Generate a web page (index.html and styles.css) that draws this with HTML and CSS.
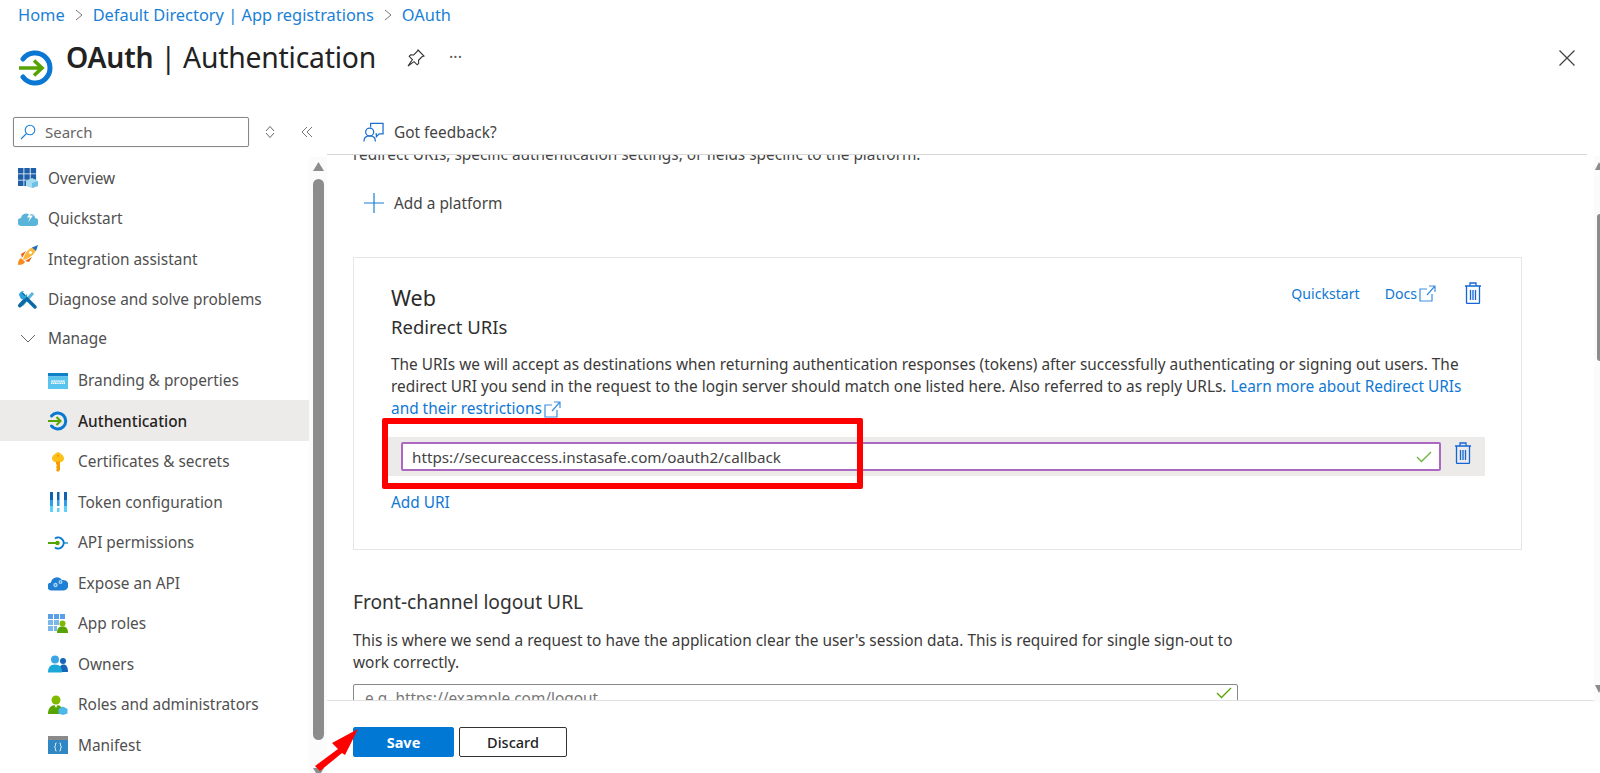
FILE: index.html
```html
<!DOCTYPE html>
<html lang="en">
<head>
<meta charset="utf-8">
<title>OAuth | Authentication</title>
<link rel="stylesheet" href="styles.css">
</head>
<body>
<div class="page">
  <nav class="crumbs">
    <a>Home</a>
    <svg class="crumb-sep" viewBox="0 0 10 14"><path d="M2 2l6 5-6 5"/></svg>
    <a>Default Directory | App registrations</a>
    <svg class="crumb-sep" viewBox="0 0 10 14"><path d="M2 2l6 5-6 5"/></svg>
    <a>OAuth</a>
  </nav>
  <header class="head">
    <svg class="head-icon" viewBox="0 0 34 36">
      <path d="M4 9A15 15 0 1 1 4 27" fill="none" stroke="#0a78d2" stroke-width="5" stroke-linecap="round"/>
      <path d="M0 18h21M15 10.500l8 7.500-8 7.500" fill="none" stroke="#57a300" stroke-width="3.600"/>
    </svg>
    <h1 class="title"><b>OAuth</b> | Authentication</h1>
    <svg class="pin" viewBox="0 0 18 18"><path d="M11 1l6 6-2 .8-3.500 3.500.2 3-1.500 1.500-3.200-3.200L1 17l4.400-6.500L2.200 7.300l1.500-1.500 3 .2L10.200 2.500z"/></svg>
    <span class="dots">···</span>
    <svg class="close" viewBox="0 0 16 16"><path d="M.5.5l15 15M15.500.5l-15 15"/></svg>
  </header>
  <div class="body">
    <aside class="side">
      <div class="side-tools">
        <div class="search">
          <svg class="search-icon" viewBox="0 0 16 16"><circle cx="10" cy="6" r="4.800"/><path d="M6.500 9.500L1 15"/></svg>
          <span>Search</span>
        </div>
        <svg class="sort" viewBox="0 0 10 14"><path d="M5 1.500L9 6M1 6l4-4.500M1 8l4 4.500L9 8"/></svg>
        <svg class="collapse" viewBox="0 0 12 12"><path d="M6 1L1 6l5 5M11 1L6 6l5 5"/></svg>
      </div>
      <div class="side-body">
        <ul class="nav">
          <li class="item">
            <svg class="ico" viewBox="0 0 20 20"><path fill="#1f5fa8" d="M0 0h5.500v5.500H0zM6.300 0h5.500v5.500H6.300zM12.600 0h5.500v5.500h-5.500zM0 6.300h5.500v5.500H0zM6.300 6.300h5.500v5.500H6.300zM12.600 6.300h5.500v5.500h-5.500zM0 12.600h5.500v5.500H0zM6.300 12.600h5.500v5.500H6.300z"/><path fill="#a5dcf0" d="M8 13l6-3 6 3v5l-6 2-6-2z"/><path fill="#6fc0e4" d="M14 15v5l6-2v-5z"/></svg>
            Overview</li>
          <li class="item">
            <svg class="ico" viewBox="0 0 20 20"><path fill="#59b4d9" d="M4 17a4 4 0 0 1-1-8 5 5 0 0 1 8-3.500 4 4 0 0 1 6 3.500 4 4 0 0 1-1 8z"/><path fill="#fff" d="M13 2l-4 6.500h3l-2 5 5-7h-3l2.500-4.500z"/></svg>
            Quickstart</li>
          <li class="item">
            <svg class="ico rocket" viewBox="0 0 20 20"><path fill="#f78d1e" d="M0 20c0-4 1-6 3-7l4 4c-1 2-3 3-7 3z"/><path fill="#e8621a" d="M3 9l5-3-4 7zM11 17l3-5-7 4z"/><path fill="#fbb83c" d="M5 15C6 9 10 4 15 2l3 3c-2 5-7 9-13 10z"/><path fill="#1e6fc4" d="M14 2.400L20 0l-2 6z"/><circle cx="12.500" cy="7.500" r="1.600" fill="#fff"/></svg>
            Integration assistant</li>
          <li class="item">
            <svg class="ico" viewBox="0 0 20 20"><path d="M15 3L4 15" stroke="#59b4d9" stroke-width="3" fill="none"/><path d="M7 10l-5 5.500" stroke="#0a6aa8" stroke-width="4" stroke-linecap="round" fill="none"/><path d="M4 4l13 13" stroke="#0a6aa8" stroke-width="3.500" stroke-linecap="round" fill="none"/><path d="M1 5a4.500 4.500 0 0 1 5-4L4 3.500 6.500 6 9 4a4.500 4.500 0 0 1-6 5z" fill="#2ba4dc"/></svg>
            Diagnose and solve problems</li>
          <li class="item manage">
            <svg class="chev" viewBox="0 0 16 10"><path d="M1 1l7 7 7-7"/></svg>
            Manage</li>
          <li class="item sub">
            <svg class="ico" viewBox="0 0 20 20"><path fill="#0f7fc8" d="M0 2h20v3.500H0z"/><path fill="#59c4ee" d="M0 5.500h20V18H0z"/><path fill="#fff" d="M3 9.500h14v3.500H3z"/><path fill="none" stroke="#59c4ee" stroke-width=".7" d="M3.500 10l1 2.500 1-2 1 2 1-2.500M8 10l1 2.500 1-2 1 2 1-2.500M12.500 10l1 2.500 1-2 1 2 1-2.500"/></svg>
            Branding &amp; properties</li>
          <li class="item sub current">
            <svg class="ico" viewBox="0 0 20 20"><path d="M3.500 5A8 8 0 1 1 3.500 15" fill="none" stroke="#0a78d2" stroke-width="3" stroke-linecap="round"/><path d="M0 10h12M8.500 6l4 4-4 4" fill="none" stroke="#57a300" stroke-width="2"/></svg>
            Authentication</li>
          <li class="item sub">
            <svg class="ico" viewBox="0 0 20 20"><path fill="#fcc21b" d="M10 0c3 1.500 6 3.500 6 6.500 0 2.500-2.500 4-6 4s-6-1.500-6-4C4 3.500 7 1.500 10 0z"/><path fill="#f59c00" d="M8 9.500h4V18l-2 2-2-2 1-1.500-1-1.500 1-1.500-1-1.500z"/><circle cx="10" cy="3.800" r="1.100" fill="#e89a00"/></svg>
            Certificates &amp; secrets</li>
          <li class="item sub">
            <svg class="ico" viewBox="0 0 20 20"><path fill="#0f62b0" d="M2 0h3v8H2zM16 0h3v8h-3zM9 0h2.500v8H9z"/><path fill="#2f9fe8" d="M2 8h3v6H2zM16 8h3v6h-3zM9 8h2.500v6H9z"/><path fill="#5fd0f8" d="M2 14h3v6H2zM16 14h3v6h-3zM9 16h2.500v4H9z"/></svg>
            Token configuration</li>
          <li class="item sub">
            <svg class="ico" viewBox="0 0 20 20"><path d="M0 10h8" stroke="#57a300" stroke-width="2"/><path d="M15 10h5" stroke="#59b4d9" stroke-width="2"/><path d="M7 5.500a5.500 5.500 0 1 1 0 9" fill="none" stroke="#0a78d2" stroke-width="2"/><circle cx="9.500" cy="10" r="2.200" fill="#57a300"/></svg>
            API permissions</li>
          <li class="item sub">
            <svg class="ico" viewBox="0 0 20 20"><path fill="#1e7fd4" d="M4 17.500a4 4 0 0 1-1-8 6 6 0 0 1 11-2.500 5.200 5.200 0 0 1 2 10.500z"/><circle cx="7.500" cy="12" r="2.200" fill="#a9d4f4"/><circle cx="12.500" cy="9" r="2" fill="#a9d4f4"/><circle cx="7.500" cy="12" r=".8" fill="#1e7fd4"/><circle cx="12.500" cy="9" r=".7" fill="#1e7fd4"/></svg>
            Expose an API</li>
          <li class="item sub">
            <svg class="ico" viewBox="0 0 20 20"><path fill="#5a9ee8" d="M0 0h5v5H0zM6 0h5v5H6zM12 0h5v5h-5z"/><path fill="#7ab8ea" d="M0 6h5v5H0zM6 6h5v5H6zM0 12h5v5H0zM6 12h3v5H6z"/><circle cx="14.500" cy="9.500" r="3" fill="#7fba00"/><path fill="#57a300" d="M9 19c0-5 2-6.500 5.500-6.500S20 14 20 19z"/></svg>
            App roles</li>
          <li class="item sub">
            <svg class="ico" viewBox="0 0 20 20"><circle cx="15" cy="7" r="3" fill="#1565b8"/><path fill="#1565b8" d="M11 18c0-5 1.500-7.500 4.500-7.500S20 13 20 18z"/><circle cx="7" cy="5.500" r="4" fill="#3aa6e6"/><path fill="#1ba8d8" d="M0 18.500c0-5 2-8 7-8s7 3 7 8z"/></svg>
            Owners</li>
          <li class="item sub">
            <svg class="ico" viewBox="0 0 20 20"><circle cx="8" cy="5" r="4.500" fill="#7fba00"/><path fill="#57a300" d="M0 19c0-6 3-9 8-9s7 3 7 9z"/><path fill="#fff" d="M6.500 10h3L8 13z"/><path fill="#4ab8e8" d="M15 11.500l4.500 2.500v4.500L15 20l-4.500-1.500V14z"/></svg>
            Roles and administrators</li>
          <li class="item sub">
            <svg class="ico" viewBox="0 0 20 20"><path fill="#8a8a8a" d="M0 1h20v5H0z"/><path fill="#2f88c4" d="M0 5h20v14H0z"/><path fill="none" stroke="#fff" d="M8.500 8c-1.500 0-1 1.500-1 2.500S6.500 12 6.500 12s1 .5 1 1.500-.5 2.500 1 2.500M11.500 8c1.500 0 1 1.500 1 2.500s1 1.500 1 1.500-1 .5-1 1.500.5 2.500-1 2.500"/></svg>
            Manifest</li>
        </ul>
        <div class="side-track">
          <svg class="arrow-up" viewBox="0 0 11 9"><path d="M5.500 0L11 9H0z"/></svg>
          <div class="side-thumb"></div>
          <svg class="arrow-down" viewBox="0 0 11 9"><path d="M0 0h11L5.500 9z"/></svg>
        </div>
      </div>
    </aside>
    <main class="main">
      <div class="toolbar">
        <svg class="feedback" viewBox="0 0 22 21"><path d="M8 5V1h13v11h-4l-3 3v-3h-1"/><circle cx="7" cy="10" r="4.200"/><path d="M1 20c0-4 2.500-6 6-6s6 2 6 6"/></svg>
        <span>Got feedback?</span>
      </div>
      <div class="scroll">
        <p class="cut">redirect URIs, specific authentication settings, or fields specific to the platform.</p>
        <div class="add-platform">
          <svg class="plus" viewBox="0 0 20 20"><path d="M10 0v20M0 10h20"/></svg>
          <span>Add a platform</span>
        </div>
        <section class="card">
          <div class="card-links">
            <a>Quickstart</a>
            <a class="docs">Docs
              <svg class="ext" viewBox="0 0 17 17"><path d="M8 4H1v12h12V9M8 10l8-9M10 1h6v6"/></svg>
            </a>
            <svg class="trash" viewBox="0 0 18 22"><path d="M1 4h16M6 4V1h6v3M2.500 4v16.500a1 1 0 0 0 1 1h11a1 1 0 0 0 1-1V4M6.500 8v10M9 8v10M11.500 8v10"/></svg>
          </div>
          <h2 class="card-title">Web</h2>
          <h3 class="card-sub">Redirect URIs</h3>
          <p class="text">The URIs we will accept as destinations when returning authentication responses (tokens) after successfully authenticating or signing out users. The redirect URI you send in the request to the login server should match one listed here. Also referred to as reply URLs. <a>Learn more about Redirect URIs and their restrictions<svg class="ext inline" viewBox="0 0 17 17"><path d="M8 4H1v12h12V9M8 10l8-9M10 1h6v6"/></svg></a></p>
          <div class="uri-row">
            <div class="uri-input">
              <span>https://secureaccess.instasafe.com/oauth2/callback</span>
              <svg class="check" viewBox="0 0 16 12"><path d="M1 6l4.500 4.500L15 1"/></svg>
            </div>
            <svg class="trash" viewBox="0 0 18 22"><path d="M1 4h16M6 4V1h6v3M2.500 4v16.500a1 1 0 0 0 1 1h11a1 1 0 0 0 1-1V4M6.500 8v10M9 8v10M11.500 8v10"/></svg>
          </div>
          <a class="add-uri">Add URI</a>
        </section>
        <h2 class="front-title">Front-channel logout URL</h2>
        <p class="text front-text">This is where we send a request to have the application clear the user's session data. This is required for single sign-out to work correctly.</p>
        <div class="logout-input">
          <span>e.g. https://example.com/logout</span>
          <svg class="check" viewBox="0 0 16 12"><path d="M1 6l4.500 4.500L15 1"/></svg>
        </div>
      </div>
      <footer class="foot">
        <button class="btn primary">Save</button>
        <button class="btn">Discard</button>
      </footer>
      <div class="main-track">
        <svg class="track-up" viewBox="0 0 8 8"><path d="M4 0l4 8H0z"/></svg>
        <div class="main-thumb"></div>
        <svg class="track-down" viewBox="0 0 8 8"><path d="M0 0h8L4 8z"/></svg>
      </div>
    </main>
  </div>
  <div class="callout"></div>
  <svg class="pointer" viewBox="0 0 50 44"><path d="M46 1L20 15l6 6L3 38l5 5 22-18 3 2z"/></svg>
</div>
</body>
</html>
```

FILE: styles.css
```css
* { box-sizing: border-box; }
html, body { margin: 0; padding: 0; background: #fff; }
body {
  font-family: "Noto Sans", "Open Sans", "Liberation Sans", sans-serif;
  font-size: 15.400px;
  color: #3b3a39;
}
a { color: #0f78d4; }
ul { list-style: none; margin: 0; padding: 0; }
h1, h2, h3, p { margin: 0; font-weight: 400; }
svg { flex: none; display: block; }

.page { position: relative; width: 1600px; height: 773px; overflow: hidden; display: flex; flex-direction: column; }

.crumbs { height: 29px; padding-left: 18px; display: flex; align-items: center; gap: 9px; font-size: 16.400px; }
.crumbs a { color: #1a7fd6; }
.crumb-sep { width: 10px; height: 14px; fill: none; stroke: #777; stroke-width: 1; }

.head { height: 84px; padding: 6px 25px 0 19px; display: flex; align-items: flex-start; }
.head-icon { width: 34px; height: 36px; margin-top: 15px; }
.title { margin-left: 13px; font-size: 28.300px; line-height: 44px; color: #222; letter-spacing: -.2px; }
.title b { font-weight: 600; }
.pin { width: 18px; height: 18px; margin: 14px 0 0 31px; fill: none; stroke: #333; stroke-width: 1.100; }
.dots { margin: 12px 0 0 24px; font-size: 16px; line-height: 20px; color: #555; letter-spacing: 0; }
.close { width: 16px; height: 16px; margin: 15px 0 0 auto; fill: none; stroke: #444; stroke-width: 1.300; }

.body { flex: 1; min-height: 0; display: flex; }

.side { width: 327px; display: flex; flex-direction: column; }
.side-tools { height: 44px; padding: 4px 0 0 13px; display: flex; align-items: flex-start; }
.search { width: 236px; height: 30px; border: 1px solid #8a8886; border-radius: 2px; padding-left: 6px; display: flex; align-items: center; gap: 9px; color: #666; font-size: 15px; box-shadow: 0 0 1px #aaa; }
.search-icon { width: 16px; height: 16px; fill: none; stroke: #1a7fd6; stroke-width: 1.100; }
.sort { width: 10px; height: 14px; margin: 8px 0 0 16px; fill: none; stroke: #666; stroke-width: 1; }
.collapse { width: 12px; height: 12px; margin: 9px 0 0 26px; fill: none; stroke: #777; stroke-width: 1; }

.side-body { flex: 1; min-height: 0; display: flex; }
.nav { width: 309px; }
.item { height: 40.500px; padding: 2px 0 0 18px; display: flex; align-items: center; gap: 10px; color: #505050; font-size: 15.400px; }
.item.manage { padding-bottom: 3px; }
.item.sub { padding-left: 48px; }
.item.current { background: #edebe9; color: #252423; font-weight: 500; }
.ico { width: 20px; height: 20px; }
.rocket { margin-top: -8px; }
.chev { width: 16px; height: 10px; margin: 0 2px 0 2px; fill: none; stroke: #666; stroke-width: 1; }

.side-track { width: 18px; background: #fbfbfb; padding: 5px 0 0 4px; }
.arrow-up, .arrow-down { width: 11px; height: 9px; fill: #8c8c8c; }
.side-thumb { width: 11px; height: 561px; margin-top: 8px; background: #8c8c8c; border-radius: 6px; }
.arrow-down { margin-top: 28px; }

.main { position: relative; flex: 1; min-width: 0; display: flex; flex-direction: column; }
.toolbar { height: 42px; margin-right: 13px; padding: 0 0 3px 36px; display: flex; align-items: center; gap: 10px; border-bottom: 1px solid #d6d6d6; color: #444; }
.feedback { width: 21px; height: 21px; fill: none; stroke: #1a6fd0; stroke-width: 1.300; }
.scroll { flex: 1; min-height: 0; overflow: hidden; padding-left: 26px; }
.cut { margin-top: -11px; line-height: 22px; color: #444; }
.add-platform { height: 40px; margin: 17px 0 0 11px; display: flex; align-items: center; gap: 10px; color: #444; }
.plus { width: 20px; height: 20px; fill: none; stroke: #1a7fd6; stroke-width: 1.200; }

.card { position: relative; width: 1169px; height: 293px; margin-top: 34px; padding: 25px 37px 0; border: 1px solid #e6e6e6; }
.card-links { position: absolute; top: 24px; right: 39px; display: flex; align-items: center; gap: 25px; font-size: 14.100px; }
.docs { display: flex; align-items: center; gap: 2px; margin-right: -1px; }
.card-links .trash { margin-left: 4px; }
.ext { width: 17px; height: 17px; fill: none; stroke: #3a8fe0; stroke-width: 1.200; }
.ext.inline { display: inline-block; vertical-align: -4px; margin-left: 2px; }
.trash { width: 18px; height: 22px; fill: none; stroke: #1365d8; stroke-width: 1.300; }
.card-title { font-size: 21.500px; line-height: 30px; color: #2a2a2a; }
.card-sub { font-size: 18.500px; line-height: 24px; margin-top: 2px; color: #2f2f2f; }
.text { font-size: 15.400px; line-height: 22px; color: #3b3a39; }
.card .text { margin-top: 15px; }
.uri-row { height: 39px; margin: 17px -1px 0 -3px; padding: 5px 13px 0 13px; background: #edebe9; display: flex; align-items: flex-start; gap: 13px; }
.uri-input { flex: 1; height: 29px; border: 2px solid #ac68c0; border-radius: 2px; background: #fff; padding: 0 7px 0 9px; display: flex; align-items: center; justify-content: space-between; color: #444; font-size: 15.250px; }
.check { width: 16px; height: 12px; fill: none; stroke: #6db33f; stroke-width: 1.300; }
.add-uri { display: block; margin-top: 16px; line-height: 22px; }

.front-title { margin-top: 38px; font-size: 19.200px; line-height: 28px; color: #333; }
.front-text { width: 885px; margin-top: 14px; line-height: 21.500px; }
.logout-input { width: 885px; height: 32px; margin-top: 11px; border: 1px solid #8a8886; border-radius: 2px; padding: 0 5px 0 11px; display: flex; align-items: flex-start; justify-content: space-between; color: #777; line-height: 28px; }
.logout-input .check { margin-top: 2px; stroke: #57a300; }

.foot { height: 73px; padding: 26px 0 0 26px; border-top: 1px solid #e1e1e1; display: flex; align-items: flex-start; gap: 5px; background: #fff; }
.btn { height: 30px; width: 108px; border: 1px solid #333; border-radius: 2px; background: #fff; font: 500 14.500px "Noto Sans", sans-serif; color: #222; padding: 0; }
.btn.primary { width: 101px; background: #0078d4; border-color: #0078d4; color: #fff; font-weight: 700; }

.main-track { position: absolute; top: 43px; right: 0; width: 6px; height: 546px; background: #fbfbfb; padding: 6px 0 0 3px; overflow: hidden; }
.track-up, .track-down { width: 8px; height: 8px; margin-left: -2px; fill: #8c8c8c; }
.main-thumb { width: 6px; height: 147px; margin-top: 44px; background: #8c8c8c; border-radius: 3px; }
.track-down { margin-top: 324px; }

.callout { position: absolute; left: 382px; top: 418px; width: 481px; height: 71px; border: 6px solid #fe0000; border-radius: 2px; }
.pointer { position: absolute; left: 312px; top: 728px; width: 50px; height: 44px; fill: #fe0000; }
```
